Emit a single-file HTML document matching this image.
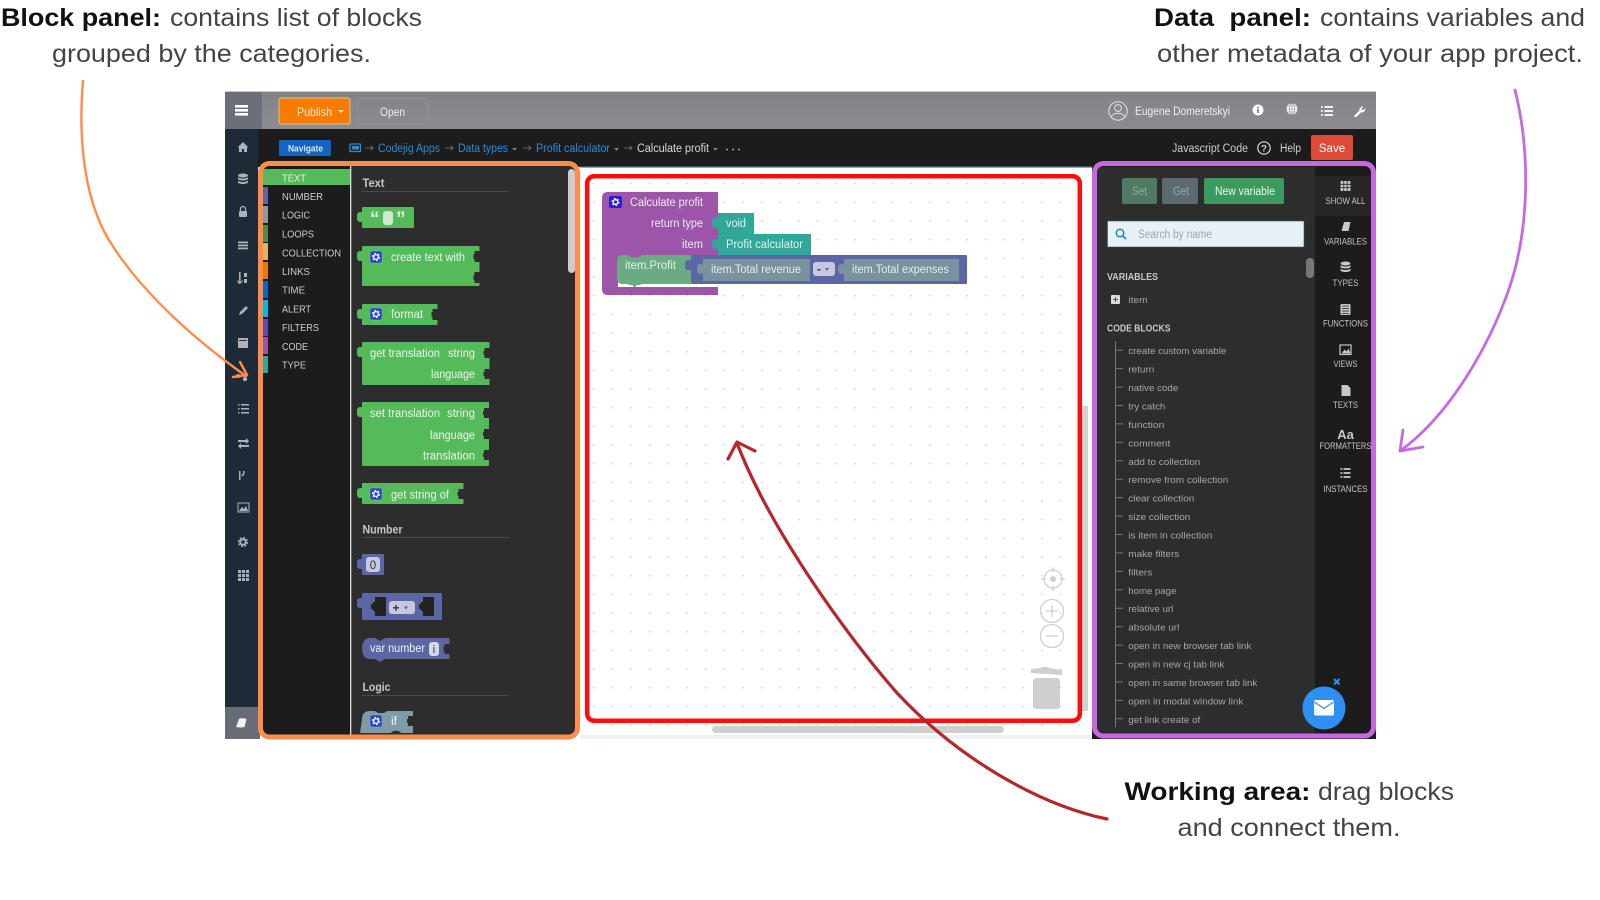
<!DOCTYPE html>
<html lang="en"><head><meta charset="utf-8"><title>Codejig App Builder panels</title>
<style>
html,body{margin:0;padding:0;background:#fff;width:1600px;height:900px;overflow:hidden}
svg{display:block}
text{font-family:"Liberation Sans",sans-serif}
.h{font-size:25px;fill:#444}
.hb{font-size:25px;font-weight:bold;fill:#111}
.b{font-size:11.5px;fill:#edf5ee}
.c{font-size:10.5px;fill:#ccc}
.g{font-size:12px;font-weight:bold;fill:#c8c8c8}
.t{font-size:9.5px;fill:#a8a8a8}
.l{font-size:9.5px;fill:#c4c4c4;text-anchor:middle}
.w{font-size:11.5px;fill:#e8efee}
</style></head><body>
<svg xmlns="http://www.w3.org/2000/svg" width="1600" height="900" viewBox="0 0 1600 900">
<defs>
<pattern id="dots" x="593" y="183" width="18.67" height="18.67" patternUnits="userSpaceOnUse"><rect width="1.3" height="1.3" fill="#c6c6c6"/></pattern>
<linearGradient id="tb" x1="0" x2="0" y1="0" y2="1"><stop offset="0" stop-color="#828387"/><stop offset="1" stop-color="#8c8d91"/></linearGradient>
<g id="gear"><rect width="12" height="12" rx="2" fill="#2f46c8" stroke="#9bb" stroke-width=".4"/><circle cx="6" cy="6" r="2.4" fill="none" stroke="#fff" stroke-width="1.3"/><circle cx="6" cy="6" r="3.5" fill="none" stroke="#fff" stroke-width="1.1" stroke-dasharray="1.8 1.87"/></g>
</defs>

<!-- headings -->
<text class="hb" x="1" y="26" textLength="160" lengthAdjust="spacingAndGlyphs">Block panel:</text>
<text class="h" x="170" y="26" textLength="252" lengthAdjust="spacingAndGlyphs">contains list of blocks</text>
<text class="h" x="52" y="62" textLength="319" lengthAdjust="spacingAndGlyphs">grouped by the categories.</text>
<text class="hb" x="1154" y="26" textLength="157" lengthAdjust="spacingAndGlyphs" xml:space="preserve">Data  panel:</text>
<text class="h" x="1320" y="26" textLength="265" lengthAdjust="spacingAndGlyphs">contains variables and</text>
<text class="h" x="1157" y="62" textLength="426" lengthAdjust="spacingAndGlyphs">other metadata of your app project.</text>
<text class="hb" x="1124.5" y="800" textLength="186" lengthAdjust="spacingAndGlyphs">Working area:</text>
<text class="h" x="1318" y="800" textLength="136" lengthAdjust="spacingAndGlyphs">drag blocks</text>
<text class="h" x="1177.5" y="836" textLength="223" lengthAdjust="spacingAndGlyphs">and connect them.</text>

<!-- app frame -->
<rect x="225" y="92" width="1151" height="37" fill="url(#tb)"/>
<rect x="225" y="91" width="1151" height="1" fill="#c9c9c9"/>
<rect x="225" y="92" width="37" height="37" fill="#6b6f77"/>
<rect x="235" y="105" width="13" height="2.6" fill="#fff"/><rect x="235" y="109" width="13" height="2.6" fill="#fff"/><rect x="235" y="113" width="13" height="2.6" fill="#fff"/>
<rect x="279" y="98" width="71" height="26" rx="2" fill="#f57c00" stroke="#f8d2ac" stroke-width=".7"/>
<text x="297" y="116" font-size="12" fill="#fde9d4" textLength="35" lengthAdjust="spacingAndGlyphs">Publish</text>
<path d="M338 110h6l-3 3z" fill="#fde9d4"/>
<rect x="357.5" y="98.5" width="70" height="25" rx="2" fill="none" stroke="#909195"/>
<text x="380" y="116" font-size="12" fill="#eee" textLength="25" lengthAdjust="spacingAndGlyphs">Open</text>
<circle cx="1118" cy="111" r="9.2" fill="none" stroke="#e4e4e4" stroke-width="1"/><circle cx="1118" cy="108" r="3.4" fill="none" stroke="#e4e4e4"/><path d="M1111 117c2-5 12-5 14 0" fill="none" stroke="#e4e4e4"/>
<text x="1135" y="115" font-size="11.5" fill="#f0f0f0" textLength="95" lengthAdjust="spacingAndGlyphs">Eugene Domeretskyi</text>
<circle cx="1258" cy="110" r="5.5" fill="#fff"/><rect x="1257.2" y="109" width="1.6" height="4" fill="#777"/><rect x="1257.2" y="106.6" width="1.6" height="1.5" fill="#777"/>
<circle cx="1292" cy="109" r="5.5" fill="#fff"/><path d="M1286.5 109h11M1292 103.5v11M1287.6 106h8.8M1287.6 112h8.8" stroke="#888" stroke-width=".6"/><ellipse cx="1292" cy="109" rx="2.6" ry="5.5" fill="none" stroke="#888" stroke-width=".6"/>
<path d="M1321 107h1.8M1321 111h1.8M1321 115h1.8M1324.5 107h8.5M1324.5 111h8.5M1324.5 115h8.5" stroke="#fff" stroke-width="1.8"/>
<path d="M1354 116l5.5-5.5c-.6-2.4 1.5-4.5 4-3.8l-2.2 2.2 1.6 1.6 2.2-2.2c.6 2.6-1.5 4.6-3.9 4l-5.4 5.2z" fill="#fff"/>

<rect x="225" y="129" width="1151" height="38" fill="#1c1c1c"/>
<rect x="279" y="140" width="52" height="16" rx="2" fill="#1565c0"/>
<text x="288" y="151.5" font-size="9.5" font-weight="bold" fill="#dbe8f6" textLength="35" lengthAdjust="spacingAndGlyphs">Navigate</text>
<rect x="350" y="144" width="10.5" height="7.5" rx="1" fill="none" stroke="#2a8bd8" stroke-width="1.3"/><rect x="352" y="146" width="7" height="3.5" fill="#2a8bd8"/>
<path d="M365 148h8m-2.5-2.2l2.5 2.2-2.5 2.2M445 148h8m-2.5-2.2l2.5 2.2-2.5 2.2M523 148h8m-2.5-2.2l2.5 2.2-2.5 2.2M624 148h8m-2.5-2.2l2.5 2.2-2.5 2.2" stroke="#777" fill="none" stroke-width=".8"/>
<text x="378" y="152" font-size="11.5" fill="#2a8bd8" textLength="62" lengthAdjust="spacingAndGlyphs">Codejig Apps</text>
<text x="458" y="152" font-size="11.5" fill="#2a8bd8" textLength="50" lengthAdjust="spacingAndGlyphs">Data types</text>
<path d="M512 148h5l-2.5 2.6z" fill="#888"/>
<text x="536" y="152" font-size="11.5" fill="#2a8bd8" textLength="74" lengthAdjust="spacingAndGlyphs">Profit calculator</text>
<path d="M614 148h5l-2.5 2.6z" fill="#888"/>
<text x="637" y="152" font-size="11.5" fill="#d8d8d8" textLength="72" lengthAdjust="spacingAndGlyphs">Calculate profit</text>
<path d="M713 148h5l-2.5 2.6z" fill="#888"/>
<circle cx="727" cy="149.5" r=".9" fill="#ccc"/><circle cx="733" cy="149.5" r=".9" fill="#ccc"/><circle cx="739" cy="149.5" r=".9" fill="#ccc"/>
<text x="1172" y="152" font-size="11.5" fill="#cfcfcf" textLength="76" lengthAdjust="spacingAndGlyphs">Javascript Code</text>
<circle cx="1264" cy="148" r="6.2" fill="none" stroke="#ddd" stroke-width="1.2"/><text x="1264" y="151.5" font-size="9.5" font-weight="bold" fill="#ddd" text-anchor="middle">?</text>
<text x="1280" y="152" font-size="11.5" fill="#cfcfcf" textLength="21" lengthAdjust="spacingAndGlyphs">Help</text>
<rect x="1311" y="135" width="42" height="25" rx="2" fill="#df4a38"/>
<text x="1332" y="152" font-size="11.5" fill="#fff" text-anchor="middle">Save</text>

<!-- left sidebar -->
<rect x="225" y="129" width="33" height="578" fill="#1f2a38"/>
<rect x="225" y="707" width="35" height="32" fill="#666b74"/>
<g fill="#aeb2b8" stroke="none">
<path d="M243 142l-5.500 5.500h1.500v4.500h3v-3h2v3h3v-4.500h1.500z"/>
<ellipse cx="243" cy="175.5" rx="5" ry="2"/><path d="M238 177c1 2 9 2 10 0v2c-1 2-9 2-10 0zM238 180.500c1 2 9 2 10 0v2c-1 2-9 2-10 0z"/>
<rect x="239" y="211" width="8" height="6" rx="1"/><path d="M240.500 211v-2a2.500 2.500 0 0 1 5 0v2" fill="none" stroke="#aeb2b8" stroke-width="1.200"/>
<rect x="238" y="241.500" width="10" height="1.800"/><rect x="238" y="244.500" width="10" height="1.800"/><rect x="238" y="247.500" width="10" height="1.800"/>
<path d="M239 272v10l-2-2v1.500l2.800 2.800 2.800-2.800V280l-2 2v-10z"/><rect x="244" y="273" width="3" height="4"/><rect x="244" y="279" width="3" height="4"/>
<path d="M239 315l1-3 6-6 2 2-6 6z"/>
<rect x="238" y="338" width="10" height="10"/><rect x="239" y="340" width="8" height="1" fill="#1f2a38"/>
<circle cx="245" cy="379" r="2.200"/><circle cx="238" cy="376" r="2"/>
<path d="M238 404h1.500v1.500H238zM238 408h1.500v1.500H238zM238 412h1.500v1.500H238z"/><rect x="241" y="404" width="8" height="1.500"/><rect x="241" y="408" width="8" height="1.500"/><rect x="241" y="412" width="8" height="1.500"/>
<path d="M238 440h8v-2l3 3-3 3v-2h-8zM249 445h-8v-2l-3 3 3 3v-2h8z"/>
<path d="M239 471h1.500v9H239zM243 471h1.500v2.500c0 2-2 2.500-3 3v-1.500c1-.5 1.500-1 1.500-1.500z"/>
<rect x="238" y="503" width="11" height="9" fill="none" stroke="#aeb2b8" stroke-width="1"/><path d="M239 511l3-4 2 2 2-3 2 5z"/>
<circle cx="243" cy="542" r="2.800" fill="none" stroke="#aeb2b8" stroke-width="2"/><circle cx="243" cy="542" r="4.500" fill="none" stroke="#aeb2b8" stroke-width="1.300" stroke-dasharray="2 1.530"/>
<path d="M238 570h3v3h-3zM242 570h3v3h-3zM246 570h3v3h-3zM238 574h3v3h-3zM242 574h3v3h-3zM246 574h3v3h-3zM238 578h3v3h-3zM242 578h3v3h-3zM246 578h3v3h-3z"/>
</g>
<path d="M236 727l3-8c1-1 5-1 7.500 0l-2 8c-2 .6-6 .6-8.500 0z" fill="#f2f2f2"/>

<!-- block panel -->
<rect x="263" y="166" width="312" height="570" fill="#2d2d2d"/>
<rect x="263" y="166" width="87" height="570" fill="#1c1c1c"/>
<rect x="350" y="166" width="1.300" height="570" fill="#dcdcdc"/>
<rect x="263" y="169" width="87" height="16" fill="#55bb5a"/>
<rect x="263" y="187" width="5" height="17" fill="#5b67a5"/><rect x="263" y="206" width="5" height="17" fill="#8a9aa3"/><rect x="263" y="225" width="5" height="17" fill="#558a4a"/><rect x="263" y="243" width="5" height="17" fill="#e0b36b"/><rect x="263" y="262" width="5" height="17" fill="#e67a00"/><rect x="263" y="281" width="5" height="17" fill="#0d66c2"/><rect x="263" y="300" width="5" height="17" fill="#00b8e6"/><rect x="263" y="319" width="5" height="17" fill="#5b4bb3"/><rect x="263" y="337" width="5" height="17" fill="#9c55a8"/><rect x="263" y="356" width="5" height="17" fill="#2fa89a"/>
<text class="c" x="282" y="181.500" textLength="24" lengthAdjust="spacingAndGlyphs" style="fill:#e8f5e8">TEXT</text>
<text class="c" x="282" y="200" textLength="41" lengthAdjust="spacingAndGlyphs">NUMBER</text>
<text class="c" x="282" y="218.500" textLength="28" lengthAdjust="spacingAndGlyphs">LOGIC</text>
<text class="c" x="282" y="237.500" textLength="32" lengthAdjust="spacingAndGlyphs">LOOPS</text>
<text class="c" x="282" y="256.500" textLength="59" lengthAdjust="spacingAndGlyphs">COLLECTION</text>
<text class="c" x="282" y="275" textLength="28" lengthAdjust="spacingAndGlyphs">LINKS</text>
<text class="c" x="282" y="293.500" textLength="23" lengthAdjust="spacingAndGlyphs">TIME</text>
<text class="c" x="282" y="312.500" textLength="29" lengthAdjust="spacingAndGlyphs">ALERT</text>
<text class="c" x="282" y="331" textLength="37" lengthAdjust="spacingAndGlyphs">FILTERS</text>
<text class="c" x="282" y="350" textLength="26" lengthAdjust="spacingAndGlyphs">CODE</text>
<text class="c" x="282" y="368.500" textLength="24" lengthAdjust="spacingAndGlyphs">TYPE</text>
<rect x="568" y="169" width="7" height="104" rx="3.500" fill="#cdcdcd"/>

<text class="g" x="362.500" y="187" textLength="22" lengthAdjust="spacingAndGlyphs">Text</text><rect x="362" y="191" width="147" height="1" fill="#4a4a4a"/>
<text class="g" x="362.500" y="533.500" textLength="40" lengthAdjust="spacingAndGlyphs">Number</text><rect x="362" y="537" width="147" height="1" fill="#4a4a4a"/>
<text class="g" x="362.500" y="691" textLength="28" lengthAdjust="spacingAndGlyphs">Logic</text><rect x="362" y="695" width="147" height="1" fill="#4a4a4a"/>

<!-- text blocks -->
<g fill="#55bb5a">
<rect x="362" y="207" width="52" height="21" rx="1"/><rect x="357" y="212" width="7" height="10" rx="3"/>
<rect x="362" y="246" width="117.500" height="40" rx="1"/><rect x="357" y="251" width="7" height="10" rx="3"/>
<rect x="362" y="304" width="75.500" height="21" rx="1"/><rect x="357" y="309" width="7" height="10" rx="3"/>
<rect x="362" y="342" width="127.500" height="43" rx="1"/><rect x="357" y="347" width="7" height="10" rx="3"/>
<rect x="362" y="402" width="127" height="64" rx="1"/><rect x="357" y="407" width="7" height="10" rx="3"/>
<rect x="362" y="483" width="101.500" height="21" rx="1"/><rect x="357" y="488" width="7" height="10" rx="3"/>
</g>
<g fill="#2d2d2d">
<path d="M479.500 251h-5v3h-1v5h1v3h5zM479.500 272h-5v3h-1v5h1v3h5zM437.500 309h-5v3h-1v5h1v3h5zM489.500 348h-5v3h-1v4h1v3h5zM489.500 369h-5v3h-1v4h1v3h5zM489 408h-5v3h-1v4h1v3h5zM489 429h-5v3h-1v4h1v3h5zM489 450h-5v3h-1v4h1v3h5zM463.500 489h-5v3h-1v4h1v3h5z"/>
</g>
<text x="370" y="225" font-size="19" font-weight="bold" fill="#e6f4e6">“</text>
<rect x="383" y="211" width="10" height="14" rx="3" fill="#cfe9d0"/>
<text x="396" y="225" font-size="19" font-weight="bold" fill="#e6f4e6">”</text>
<use href="#gear" x="370" y="251"/><use href="#gear" x="370" y="308"/><use href="#gear" x="370" y="488"/>
<text class="b" x="391" y="261" textLength="74" lengthAdjust="spacingAndGlyphs">create text with</text>
<text class="b" x="391" y="318" textLength="32" lengthAdjust="spacingAndGlyphs">format</text>
<text class="b" x="370" y="357" textLength="70" lengthAdjust="spacingAndGlyphs">get translation</text>
<text class="b" x="448" y="357" textLength="27" lengthAdjust="spacingAndGlyphs">string</text>
<text class="b" x="431" y="378" textLength="44" lengthAdjust="spacingAndGlyphs">language</text>
<text class="b" x="370" y="417" textLength="70" lengthAdjust="spacingAndGlyphs">set translation</text>
<text class="b" x="447" y="417" textLength="28" lengthAdjust="spacingAndGlyphs">string</text>
<text class="b" x="430" y="439" textLength="45" lengthAdjust="spacingAndGlyphs">language</text>
<text class="b" x="423" y="459.500" textLength="52" lengthAdjust="spacingAndGlyphs">translation</text>
<text class="b" x="391" y="498.500" textLength="58" lengthAdjust="spacingAndGlyphs">get string of</text>

<!-- number blocks -->
<g fill="#5b67a5">
<rect x="362" y="554" width="22" height="21" rx="1"/><rect x="357" y="559" width="7" height="10" rx="3"/>
<rect x="362" y="593" width="80" height="27" rx="1"/><rect x="357" y="598" width="7" height="10" rx="3"/>
<path d="M370 638H375l5 3 5-3H449.500V659H385l-5 3-5-3H370c-5 0-8-4-8-10.500s3-10.500 8-10.500z"/>
</g>
<rect x="366" y="557" width="14" height="15" rx="3" fill="#c5c8e0"/><text x="373" y="569" font-size="11.500" fill="#333" text-anchor="middle">0</text>
<path d="M375 597h11v19h-11v-5h-2v-2h-2v-5h2v-2h2zM423 597h11v19h-11v-5h-2v-2h-2v-5h2v-2h2z" fill="#222"/>
<rect x="389" y="601" width="26" height="13" rx="3" fill="#c5c8e0"/><text x="396" y="612" font-size="11.500" font-weight="bold" fill="#333" text-anchor="middle">+</text><path d="M404 606.500h4l-2 3z" fill="#667"/>
<text class="b" x="370" y="652" textLength="55" lengthAdjust="spacingAndGlyphs">var number</text>
<rect x="429" y="642" width="10" height="14" rx="3" fill="#d5d8ea"/><text x="434" y="653" font-size="11" fill="#333" text-anchor="middle">i</text>
<path d="M449.500 644h-5v2.500h-1v5h1v2.500h5z" fill="#2d2d2d"/>

<!-- if block -->
<path d="M362 719c0-5 3-8 8-8h5l3 2h6l3-2h26v22h-12c-1-3-9-3-10 0h-31z" fill="#7f9ba5"/>
<path d="M413 716h-5v3h-1v4h1v3h5z" fill="#2d2d2d"/>
<use href="#gear" x="370" y="715"/>
<text class="b" x="391" y="725" textLength="6" lengthAdjust="spacingAndGlyphs">if</text>

<!-- canvas -->
<rect x="580" y="167" width="512" height="568" fill="#fff"/>
<rect x="580" y="167" width="512" height="568" fill="url(#dots)"/>
<rect x="580" y="735" width="512" height="4" fill="#eef1f5"/>
<rect x="580" y="166.500" width="512" height="1.200" fill="#4a8db5"/>
<rect x="712" y="726" width="292" height="7" rx="3.500" fill="#cfcfcf"/>
<rect x="1082" y="406" width="6" height="305" fill="#d2d2d2"/>

<!-- function block -->
<path d="M608 192h110v68h-100v27h100v8h-110c-4 0-6-2-6-6v-91c0-4 2-6 6-6z" fill="#9c55a8"/>
<rect x="609" y="196" width="13" height="12" rx="2" fill="#2a1fd0"/><circle cx="615.500" cy="202" r="2.300" fill="none" stroke="#fff" stroke-width="1.300"/><circle cx="615.500" cy="202" r="3.500" fill="none" stroke="#fff" stroke-width="1.100" stroke-dasharray="1.800 1.870"/>
<text class="w" x="630" y="206" textLength="73" lengthAdjust="spacingAndGlyphs">Calculate profit</text>
<text class="w" x="651" y="227" textLength="52" lengthAdjust="spacingAndGlyphs">return type</text>
<text class="w" x="682" y="248" textLength="21" lengthAdjust="spacingAndGlyphs">item</text>
<g fill="#2fa89a"><rect x="718" y="213" width="36" height="21"/><rect x="712" y="218" width="7" height="10" rx="3"/><rect x="718" y="234" width="93" height="21"/><rect x="712" y="239" width="7" height="10" rx="3"/></g>
<text class="w" x="726" y="227" textLength="20" lengthAdjust="spacingAndGlyphs">void</text>
<text class="w" x="726" y="248" textLength="77" lengthAdjust="spacingAndGlyphs">Profit calculator</text>
<path d="M624 255h4l4 2.500h6l4-2.500h49v29h-49l-2 1h-3l-2.500 2.500-2.500-2.500h-3l-1-1h-5c-4 0-6-2-6-6v-17c0-4 2-6 6-6z" fill="#6aab82"/>
<text class="w" x="625" y="269" textLength="51" lengthAdjust="spacingAndGlyphs">item.Profit</text>
<rect x="691" y="255" width="276" height="29" rx="1" fill="#5b67a5"/><rect x="685" y="260" width="8" height="10" rx="3" fill="#5b67a5"/>
<g fill="#7a919e"><rect x="703" y="259" width="107" height="22"/><rect x="697" y="264" width="7" height="10" rx="3"/><rect x="844" y="259" width="115" height="22"/><rect x="838" y="264" width="7" height="10" rx="3"/></g>
<text class="w" x="711" y="273" textLength="90" lengthAdjust="spacingAndGlyphs">item.Total revenue</text>
<rect x="813" y="262" width="22" height="14" rx="3" fill="#c5c8e0"/><text x="819" y="273" font-size="11.500" font-weight="bold" fill="#333" text-anchor="middle">-</text><path d="M825 268h4l-2 3z" fill="#667"/>
<text class="w" x="852" y="273" textLength="97" lengthAdjust="spacingAndGlyphs">item.Total expenses</text>

<!-- canvas controls -->
<g fill="none" stroke="#cfcfcf" stroke-width="1.300">
<circle cx="1053" cy="579" r="9"/><path d="M1053 567v5M1053 586v5M1041 579h5M1060 579h5"/>
<circle cx="1052" cy="611" r="11.500"/><path d="M1046 611h12M1052 605v12"/>
<circle cx="1052" cy="636" r="11.500"/><path d="M1046 636h12"/>
</g>
<circle cx="1053" cy="579" r="3" fill="#cfcfcf"/>
<path d="M1031 669l10-1c1-1.500 7-1.500 8 0l13 2v5l-31-2z" fill="#cfcfcf"/>
<rect x="1033" y="678" width="27" height="31" rx="3" fill="#cfcfcf"/>

<!-- data panel -->
<rect x="1092" y="161" width="284" height="578" fill="#1c1c1c"/>
<rect x="1097" y="167" width="218" height="569" fill="#2d2d2d"/>
<rect x="1315" y="176" width="56" height="40" fill="#262626"/>
<rect x="1122" y="178" width="35" height="26" rx="2" fill="#4d7a60"/><text x="1132" y="195" font-size="11.500" fill="#95ab9f" textLength="15" lengthAdjust="spacingAndGlyphs">Set</text>
<rect x="1162" y="178" width="36" height="26" rx="2" fill="#5b6b70"/><text x="1173" y="195" font-size="11.500" fill="#9aa8ad" textLength="16" lengthAdjust="spacingAndGlyphs">Get</text>
<rect x="1204" y="178" width="80" height="26" rx="2" fill="#3a9b5c"/><text x="1215" y="195" font-size="11.500" fill="#eef8f1" textLength="60" lengthAdjust="spacingAndGlyphs">New variable</text>
<rect x="1107.500" y="221" width="196.500" height="26" fill="#e8f2f6" stroke="#3a5a70" stroke-width=".6"/>
<circle cx="1120" cy="233" r="3.800" fill="none" stroke="#1e88c8" stroke-width="1.500"/><path d="M1123 236l3 3" stroke="#1e88c8" stroke-width="1.800"/>
<text x="1138" y="238" font-size="11.500" fill="#9ca5a9" textLength="74" lengthAdjust="spacingAndGlyphs">Search by name</text>
<rect x="1306" y="258" width="8" height="20" rx="4" fill="#777"/>
<text x="1107" y="280" font-size="10.500" font-weight="bold" fill="#c8c8c8" textLength="51" lengthAdjust="spacingAndGlyphs">VARIABLES</text>
<rect x="1111" y="295" width="9" height="9" rx="1" fill="#ddd"/><path d="M1113 299.500h5M1115.500 297v5" stroke="#555" stroke-width="1"/>
<text class="t" x="1128.500" y="303" textLength="19" lengthAdjust="spacingAndGlyphs">item</text>
<text x="1107" y="331.500" font-size="10.500" font-weight="bold" fill="#c8c8c8" textLength="63.500" lengthAdjust="spacingAndGlyphs">CODE BLOCKS</text>
<g transform="translate(0,-.8)">
<rect x="1115" y="342" width="1" height="386" fill="#777"/>
<path d="M1115 351h8M1115 369.400h8M1115 387.900h8M1115 406.300h8M1115 424.700h8M1115 443.200h8M1115 461.600h8M1115 480h8M1115 498.400h8M1115 516.900h8M1115 535.300h8M1115 553.700h8M1115 572.200h8M1115 590.600h8M1115 609h8M1115 627.500h8M1115 645.900h8M1115 664.300h8M1115 682.700h8M1115 701.200h8M1115 719.600h8" stroke="#777" stroke-width="1"/>
<text class="t" x="1128.300" y="355" textLength="98" lengthAdjust="spacingAndGlyphs">create custom variable</text>
<text class="t" x="1128.300" y="373.400" textLength="26" lengthAdjust="spacingAndGlyphs">return</text>
<text class="t" x="1128.300" y="391.900" textLength="50" lengthAdjust="spacingAndGlyphs">native code</text>
<text class="t" x="1128.300" y="410.300" textLength="37" lengthAdjust="spacingAndGlyphs">try catch</text>
<text class="t" x="1128.300" y="428.700" textLength="36" lengthAdjust="spacingAndGlyphs">function</text>
<text class="t" x="1128.300" y="447.200" textLength="42" lengthAdjust="spacingAndGlyphs">comment</text>
<text class="t" x="1128.300" y="465.600" textLength="72" lengthAdjust="spacingAndGlyphs">add to collection</text>
<text class="t" x="1128.300" y="484" textLength="100" lengthAdjust="spacingAndGlyphs">remove from collection</text>
<text class="t" x="1128.300" y="502.400" textLength="66" lengthAdjust="spacingAndGlyphs">clear collection</text>
<text class="t" x="1128.300" y="520.900" textLength="62" lengthAdjust="spacingAndGlyphs">size collection</text>
<text class="t" x="1128.300" y="539.300" textLength="84" lengthAdjust="spacingAndGlyphs">is item in collection</text>
<text class="t" x="1128.300" y="557.700" textLength="51" lengthAdjust="spacingAndGlyphs">make filters</text>
<text class="t" x="1128.300" y="576.200" textLength="24" lengthAdjust="spacingAndGlyphs">filters</text>
<text class="t" x="1128.300" y="594.600" textLength="48" lengthAdjust="spacingAndGlyphs">home page</text>
<text class="t" x="1128.300" y="613" textLength="45" lengthAdjust="spacingAndGlyphs">relative url</text>
<text class="t" x="1128.300" y="631.500" textLength="51" lengthAdjust="spacingAndGlyphs">absolute url</text>
<text class="t" x="1128.300" y="649.900" textLength="123" lengthAdjust="spacingAndGlyphs">open in new browser tab link</text>
<text class="t" x="1128.300" y="668.300" textLength="96" lengthAdjust="spacingAndGlyphs">open in new cj tab link</text>
<text class="t" x="1128.300" y="686.700" textLength="129" lengthAdjust="spacingAndGlyphs">open in same browser tab link</text>
<text class="t" x="1128.300" y="705.200" textLength="115" lengthAdjust="spacingAndGlyphs">open in modal window link</text>
<text class="t" x="1128.300" y="723.600" textLength="72" lengthAdjust="spacingAndGlyphs">get link create of</text>
</g>

<!-- data tabs -->
<g fill="#c8c8c8">
<rect x="1340.500" y="181" width="10" height="10" rx="1"/><path d="M1340.500 184.300h10M1340.500 187.500h10M1343.800 181v10M1347.200 181v10" stroke="#262626" stroke-width=".8"/>
<path d="M1341.500 231l2.500-9h6.500l-2 9z"/>
<ellipse cx="1345.500" cy="263.500" rx="5" ry="2"/><path d="M1340.500 265c1 2 9 2 10 0v2c-1 2-9 2-10 0zM1340.500 268.500c1 2 9 2 10 0v2c-1 2-9 2-10 0z"/>
<rect x="1340.500" y="304" width="10" height="11" rx="1"/><path d="M1342 308.500h7M1342 311h7M1342 313.500h7M1342 306h7" stroke="#1c1c1c" stroke-width=".8"/>
<rect x="1340" y="345" width="11" height="9.500" fill="none" stroke="#c8c8c8" stroke-width="1.200"/><path d="M1341.500 353.500l3-4 2 2 2-3 2 5z"/>
<path d="M1341.500 385h6l3 3v8h-9z"/>
</g>
<text x="1345.500" y="439" font-size="13" font-weight="bold" fill="#c8c8c8" text-anchor="middle">Aa</text>
<path d="M1340.500 469h1.800M1340.500 473h1.800M1340.500 477h1.800M1343.500 469h7M1343.500 473h7M1343.500 477h7" stroke="#c8c8c8" stroke-width="1.800"/>
<text class="l" x="1345.500" y="204" textLength="40" lengthAdjust="spacingAndGlyphs">SHOW ALL</text>
<text class="l" x="1345.500" y="244.500" textLength="43" lengthAdjust="spacingAndGlyphs">VARIABLES</text>
<text class="l" x="1345.500" y="286" textLength="26" lengthAdjust="spacingAndGlyphs">TYPES</text>
<text class="l" x="1345.500" y="326.500" textLength="45" lengthAdjust="spacingAndGlyphs">FUNCTIONS</text>
<text class="l" x="1345.500" y="367" textLength="24" lengthAdjust="spacingAndGlyphs">VIEWS</text>
<text class="l" x="1345.500" y="408" textLength="25" lengthAdjust="spacingAndGlyphs">TEXTS</text>
<text class="l" x="1345.500" y="449" textLength="52" lengthAdjust="spacingAndGlyphs">FORMATTERS</text>
<text class="l" x="1345.500" y="492" textLength="44" lengthAdjust="spacingAndGlyphs">INSTANCES</text>

<!-- mail button -->
<circle cx="1324" cy="708" r="21.500" fill="#2e90f0"/>
<rect x="1314" y="700" width="20" height="15.500" rx="2" fill="#fff"/>
<path d="M1314.500 702l9.500 6.500 9.500-6.500" fill="none" stroke="#2e90f0" stroke-width="1.200"/>
<path d="M1334 679l5.500 5.500M1339.500 679l-5.500 5.500" stroke="#2e90f0" stroke-width="2"/>

<!-- highlight boxes -->
<rect x="260.500" y="163.500" width="317" height="573.500" rx="9" fill="none" stroke="#ff8c4a" stroke-width="5"/>
<rect x="587.200" y="176.200" width="492.600" height="544.600" rx="7" fill="none" stroke="#fe0c0c" stroke-width="4.500"/>
<rect x="1094.500" y="163.500" width="279" height="572.500" rx="9" fill="none" stroke="#c768e2" stroke-width="5"/>

<!-- arrows -->
<g fill="none" stroke-linecap="round" stroke-linejoin="round">
<path d="M83 81C78 140 84 205 114 248C145 295 195 340 246 376" stroke="#ff8c4a" stroke-width="2.400"/>
<path d="M240 362L247 375L233 377" stroke="#ff8c4a" stroke-width="2.400"/>
<path d="M1515 90C1530 150 1530 225 1510 286C1490 345 1450 415 1400 451" stroke="#c768e2" stroke-width="2.800"/>
<path d="M1403 430L1400 451L1423 447" stroke="#c768e2" stroke-width="2.800"/>
<path d="M1107 819C1040 805 960 760 898 694C850 640 770 530 737 443" stroke="#b3282d" stroke-width="3.200"/>
<path d="M728 459L737 442L755 451" stroke="#b3282d" stroke-width="3.200"/>
</g>
</svg>
</body></html>
